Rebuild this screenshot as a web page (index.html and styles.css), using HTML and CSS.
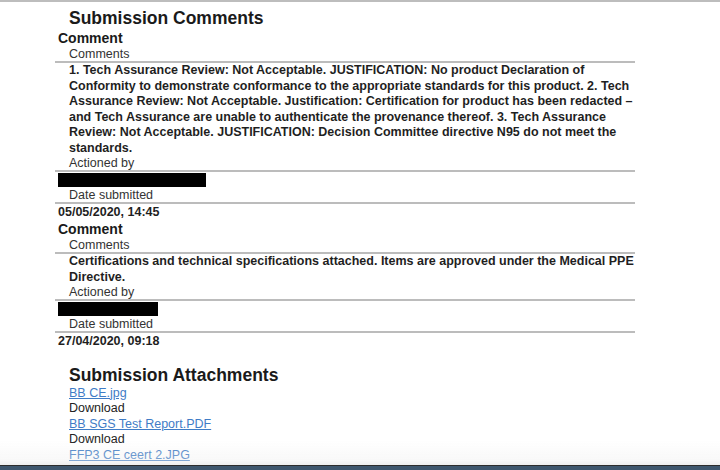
FILE: index.html
```html
<!DOCTYPE html>
<html lang="en">
<head>
<meta charset="utf-8">
<title>Submission Comments</title>
<link rel="stylesheet" href="styles.css">
</head>
<body>
<div class="topbar"></div>
<main class="doc">
  <h1 class="section-title">Submission Comments</h1>

  <section class="comment">
    <h2 class="comment-title">Comment</h2>
    <div class="field-label">Comments</div>
    <div class="field-value">1. Tech Assurance Review: Not Acceptable. JUSTIFICATION: No product Declaration of Conformity to demonstrate conformance to the appropriate standards for this product. 2. Tech Assurance Review: Not Acceptable. Justification: Certification for product has been redacted – and Tech Assurance are unable to authenticate the provenance thereof. 3. Tech Assurance Review: Not Acceptable. JUSTIFICATION: Decision Committee directive N95 do not meet the standards.</div>
    <div class="field-label">Actioned by</div>
    <div class="redacted-row"><span class="redacted redacted-long"></span></div>
    <div class="field-label">Date submitted</div>
    <div class="field-date">05/05/2020, 14:45</div>
  </section>

  <section class="comment">
    <h2 class="comment-title">Comment</h2>
    <div class="field-label">Comments</div>
    <div class="field-value">Certifications and technical specifications attached. Items are approved under the Medical PPE Directive.</div>
    <div class="field-label">Actioned by</div>
    <div class="redacted-row"><span class="redacted redacted-short"></span></div>
    <div class="field-label">Date submitted</div>
    <div class="field-date">27/04/2020, 09:18</div>
  </section>

  <h1 class="section-title attachments-title">Submission Attachments</h1>
  <ul class="attachments">
    <li><a href="#" class="file-link">BB CE.jpg</a></li>
    <li>Download</li>
    <li><a href="#" class="file-link">BB SGS Test Report.PDF</a></li>
    <li>Download</li>
    <li><a href="#" class="file-link">FFP3 CE ceert 2.JPG</a></li>
    <li>Download</li>
  </ul>
</main>
<div class="bottom-shade"></div>
</body>
</html>
```

FILE: styles.css
```css
html, body {
  margin: 0;
  padding: 0;
  background: #ffffff;
  overflow: hidden;
}

body {
  width: 720px;
  height: 470px;
  font-family: "Liberation Sans", Arial, sans-serif;
  color: #1f1f1f;
}

.topbar {
  height: 2px;
  background: #bdbdbd;
}

.doc {
  width: 580px;
  margin-left: 55px;
  padding-top: 6px;
}

.section-title {
  margin: 0;
  padding-left: 14px;
  font-size: 17.5px;
  line-height: 21px;
  font-weight: bold;
  color: #1a1a1a;
}

.comment-title {
  margin: 0;
  padding-left: 3px;
  font-size: 14px;
  line-height: 18px;
  font-weight: bold;
  color: #1a1a1a;
}

.field-label {
  padding-left: 14px;
  font-size: 12.5px;
  line-height: 14px;
  color: #333333;
  border-bottom: 2px solid #bcbcbc;
}

.field-value {
  padding-left: 14px;
  font-size: 12.5px;
  line-height: 15.5px;
  font-weight: bold;
  color: #1f1f1f;
}

.redacted-row {
  height: 16px;
  padding-left: 3px;
  padding-top: 1px;
  box-sizing: border-box;
}

.redacted {
  display: block;
  height: 14px;
  background: #000000;
}

.redacted-long {
  width: 148px;
}

.redacted-short {
  width: 100px;
}

.field-date {
  padding-left: 3px;
  font-size: 12.5px;
  line-height: 16px;
  font-weight: bold;
  color: #1f1f1f;
}

.attachments-title {
  margin-top: 15.5px;
}

.attachments {
  list-style: none;
  margin: 0;
  padding: 0 0 0 14px;
  font-size: 12.5px;
  line-height: 15.5px;
  color: #222222;
}

.file-link {
  color: #3f7cc6;
  text-decoration: underline;
}

.bottom-shade {
  position: fixed;
  left: 0;
  right: 0;
  bottom: 0;
  height: 30px;
  background: linear-gradient(to bottom, rgba(240,240,240,0) 0px, rgba(236,236,236,0.35) 20px, rgba(232,232,232,0.75) 25px, #2c2c2c 25px, #2c2c2c 26px, #3e566d 26px, #3e566d 30px);
}
```
